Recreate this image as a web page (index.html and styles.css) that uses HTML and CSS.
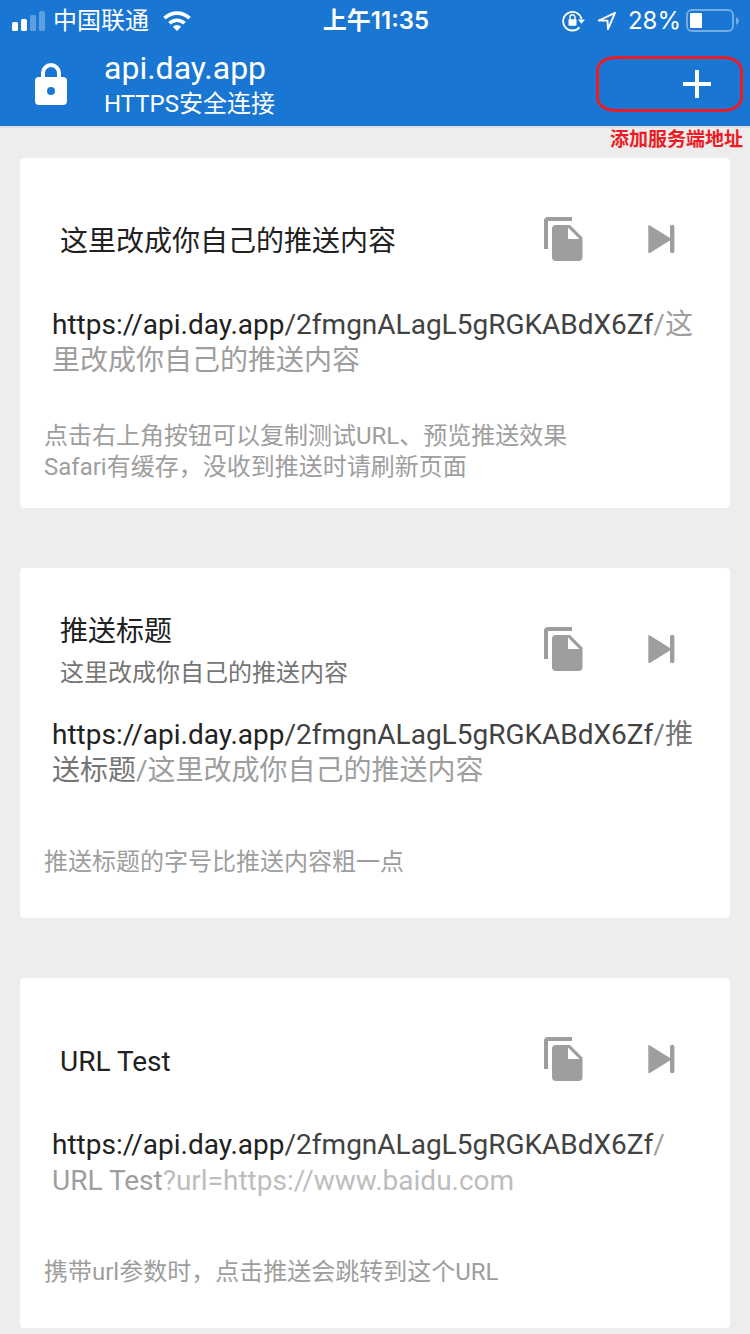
FILE: index.html
```html
<!DOCTYPE html>
<html lang="zh-CN">
<head>
    <meta charset="UTF-8">
    <meta name="viewport" content="width=device-width, initial-scale=1.0">
    <title>api.day.app</title>
    <link rel="stylesheet" href="styles.css">
</head>
<body>
    <!-- icons shared by all cards -->
    <svg class="sprite" aria-hidden="true">
        <symbol id="icon-copy" viewBox="0 0 40 44">
            <path d="M28 0H4a4 4 0 0 0-4 4v28h4V4h24z"/>
            <path d="M26 8H12a4 4 0 0 0-4 4v28a4 4 0 0 0 4 4h22.500a4 4 0 0 0 4-4V20.500zM24 22V10.500L35.500 22z" fill-rule="evenodd"/>
        </symbol>
        <symbol id="icon-play" viewBox="0 0 28 30">
            <path d="M1.500 1.200L22 14V3a2.200 2.200 0 0 1 4.400 0v24a2.200 2.200 0 0 1-4.400 0V16.500L1.800 29Q.3 29.500.3 28V2Q.3.500 1.500 1.200z"/>
        </symbol>
    </svg>

    <header class="header">
        <div class="status">
            <div class="status-left">
                <svg class="signal" viewBox="0 0 34 20" width="34" height="20">
                    <rect x="0" y="11" width="6" height="9" rx="1.500"/>
                    <rect x="9" y="8" width="6" height="12" rx="1.500"/>
                    <rect x="18" y="4" width="6" height="16" rx="1.500" opacity=".3"/>
                    <rect x="27" y="0" width="6" height="20" rx="1.500" opacity=".3"/>
                </svg>
                <span>中国联通</span>
                <svg class="wifi" viewBox="0 0 28 20" width="28" height="20">
                    <path d="M14 20l-4.200-4.300a6 6 0 0 1 8.400 0z"/>
                    <path d="M6.500 12.300a10.700 10.700 0 0 1 15 0M1.500 7.200a17.700 17.700 0 0 1 25 0" fill="none" stroke="#fff" stroke-width="3.700"/>
                </svg>
            </div>
            <span class="time">上午11:35</span>
            <div class="status-right">
                <svg viewBox="0 0 24 22" width="24" height="22">
                    <path d="M17.500 17.300A9.300 9.300 0 1 1 19.500 9" fill="none" stroke="#fff" stroke-width="1.800"/>
                    <path d="M16 9.500h7l-3.500 4.300z"/>
                    <rect x="6.500" y="9.300" width="8" height="6.500" rx="1"/>
                    <path d="M8 10V7.300a2.500 2.500 0 0 1 5 0V10" fill="none" stroke="#fff" stroke-width="1.400"/>
                </svg>
                <svg class="location" viewBox="0 0 20 20" width="20" height="20">
                    <path d="M1.800 9.500L18 1.800 11 18.200 10.500 9.600z" fill="none" stroke="#fff" stroke-width="1.900" stroke-linejoin="round"/>
                </svg>
                <span>28%</span>
                <svg viewBox="0 0 54 24" width="54" height="24">
                    <rect x="1" y="1" width="46" height="21" rx="5" fill="none" stroke="#fff" stroke-width="2" opacity=".4"/>
                    <rect x="4" y="4" width="12" height="15" rx="1"/>
                    <path d="M50 8q3 1.500 3 4t-3 4z" opacity=".4"/>
                </svg>
            </div>
        </div>
        <div class="toolbar">
            <svg class="lock" viewBox="0 0 32 42" width="32" height="42">
                <path d="M4 14h24a4 4 0 0 1 4 4v20a4 4 0 0 1-4 4H4a4 4 0 0 1-4-4V18a4 4 0 0 1 4-4zM16 24a4 4 0 1 0 0 8 4 4 0 0 0 0-8z" fill-rule="evenodd"/>
                <path d="M8 15V10a8 8 0 0 1 16 0v5" fill="none" stroke="#fff" stroke-width="4"/>
            </svg>
            <div class="site">
                <h1>api.day.app</h1>
                <p>HTTPS安全连接</p>
            </div>
            <button class="add" type="button" aria-label="添加">
                <svg viewBox="0 0 28 28" width="28" height="28"><path d="M12 0h4v12h12v4H16v12h-4V16H0v-4h12z"/></svg>
            </button>
        </div>
        <div class="callout">
            <div class="callout-box"></div>
            <p>添加服务端地址</p>
        </div>
    </header>

    <main class="cards">
        <section class="card">
            <div class="card-head">
                <div class="card-title">
                    <h2>这里改成你自己的推送内容</h2>
                </div>
                <button type="button" aria-label="复制"><svg width="40" height="44"><use href="#icon-copy"/></svg></button>
                <button type="button" aria-label="预览"><svg width="28" height="30"><use href="#icon-play"/></svg></button>
            </div>
            <p class="url"><span class="host">https://api.day.app</span><span class="key">/2fmgnALagL5gRGKABdX6Zf</span><span class="body">/这里改成你自己的推送内容</span></p>
            <p class="note">点击右上角按钮可以复制测试URL、预览推送效果<br>Safari有缓存，没收到推送时请刷新页面</p>
        </section>

        <section class="card">
            <div class="card-head">
                <div class="card-title">
                    <h2>推送标题</h2>
                    <p>这里改成你自己的推送内容</p>
                </div>
                <button type="button" aria-label="复制"><svg width="40" height="44"><use href="#icon-copy"/></svg></button>
                <button type="button" aria-label="预览"><svg width="28" height="30"><use href="#icon-play"/></svg></button>
            </div>
            <p class="url"><span class="host">https://api.day.app</span><span class="key">/2fmgnALagL5gRGKABdX6Zf</span><span class="title">/推送标题</span><span class="body">/这里改成你自己的推送内容</span></p>
            <p class="note">推送标题的字号比推送内容粗一点</p>
        </section>

        <section class="card">
            <div class="card-head">
                <div class="card-title">
                    <h2>URL Test</h2>
                </div>
                <button type="button" aria-label="复制"><svg width="40" height="44"><use href="#icon-copy"/></svg></button>
                <button type="button" aria-label="预览"><svg width="28" height="30"><use href="#icon-play"/></svg></button>
            </div>
            <p class="url"><span class="host">https://api.day.app</span><span class="key">/2fmgnALagL5gRGKABdX6Zf</span><span class="body">/<wbr>URL Test</span><span class="param">?url=https://www.baidu.com</span></p>
            <p class="note">携带url参数时，点击推送会跳转到这个URL</p>
        </section>
    </main>
</body>
</html>
```
FILE: styles.css
```css
* {
    box-sizing: border-box;
}
body {
    margin: 0;
    background: #ededed;
    font-family: Roboto, "Noto Sans CJK SC", sans-serif;
    color: #212121;
}
h1, h2, p {
    margin: 0;
    font-weight: 400;
}
svg {
    display: block;
    fill: currentColor;
    flex: none;
}
button {
    display: flex;
    padding: 0;
    border: none;
    background: none;
    color: inherit;
    cursor: pointer;
}
.sprite {
    position: absolute;
    width: 0;
    height: 0;
}

/* header */
.header {
    position: relative;
    background: #1976d2;
    border-bottom: 2px solid #e0e0e0;
    color: #fff;
}
.status {
    display: grid;
    grid-template-columns: 1fr auto 1fr;
    align-items: center;
    height: 42px;
    padding: 0 10px 0 12px;
    font-family: Inter, "Noto Sans CJK SC", sans-serif;
    font-size: 24px;
    line-height: 42px;
}
.status-left, .status-right {
    display: flex;
    align-items: center;
    gap: 7px;
}
.status-right {
    justify-content: flex-end;
}
.status-right span {
    margin-right: -2px;
}
.wifi {
    margin-left: 7px;
}
.location {
    margin: 0 4px;
}
.time {
    font-weight: 600;
}
.toolbar {
    display: flex;
    align-items: center;
    height: 84px;
    padding: 0 39px 0 35px;
}
.site {
    flex: 1;
    margin-left: 37px;
    padding-top: 2px;
}
.site h1 {
    font-size: 32px;
    line-height: 38px;
}
.site p {
    font-size: 24px;
    line-height: 34px;
}

/* red hint over the add button */
.callout {
    position: absolute;
    top: 56px;
    right: 7px;
    width: 147px;
    color: #ed1c24;
    pointer-events: none;
}
.callout-box {
    height: 56px;
    border: 3px solid #ed1c24;
    border-radius: 20px / 14px;
}
.callout p {
    margin-top: 14px;
    font-size: 19px;
    line-height: 28px;
    font-weight: 700;
    text-align: right;
    white-space: nowrap;
}

/* cards */
.cards {
    display: flex;
    flex-direction: column;
    gap: 60px;
    padding: 30px 20px 6px;
}
.card {
    padding-top: 21px;
    background: #fff;
    border-radius: 4px;
}
.card-head {
    display: flex;
    align-items: center;
    height: 120px;
    padding: 0 54px 0 40px;
    color: #9e9e9e;
}
.card-head button + button {
    margin-left: 64px;
}
.card-title {
    flex: 1;
    padding-top: 6px;
}
.card-title h2 {
    color: #212121;
    font-size: 28px;
    line-height: 42px;
}
.card-title p {
    color: #757575;
    font-size: 24px;
    line-height: 40px;
}
.url {
    padding: 8px 32px 0;
    font-size: 28px;
    line-height: 36px;
}
.key {
    color: #424242;
}
.title {
    color: #757575;
}
.body {
    color: #9e9e9e;
}
.param {
    color: #bdbdbd;
}
.note {
    display: flex;
    flex-direction: column;
    justify-content: center;
    min-height: 112px;
    margin-top: 17px;
    padding: 0 24px;
    color: #9e9e9e;
    font-size: 24px;
    line-height: 31px;
}
```
